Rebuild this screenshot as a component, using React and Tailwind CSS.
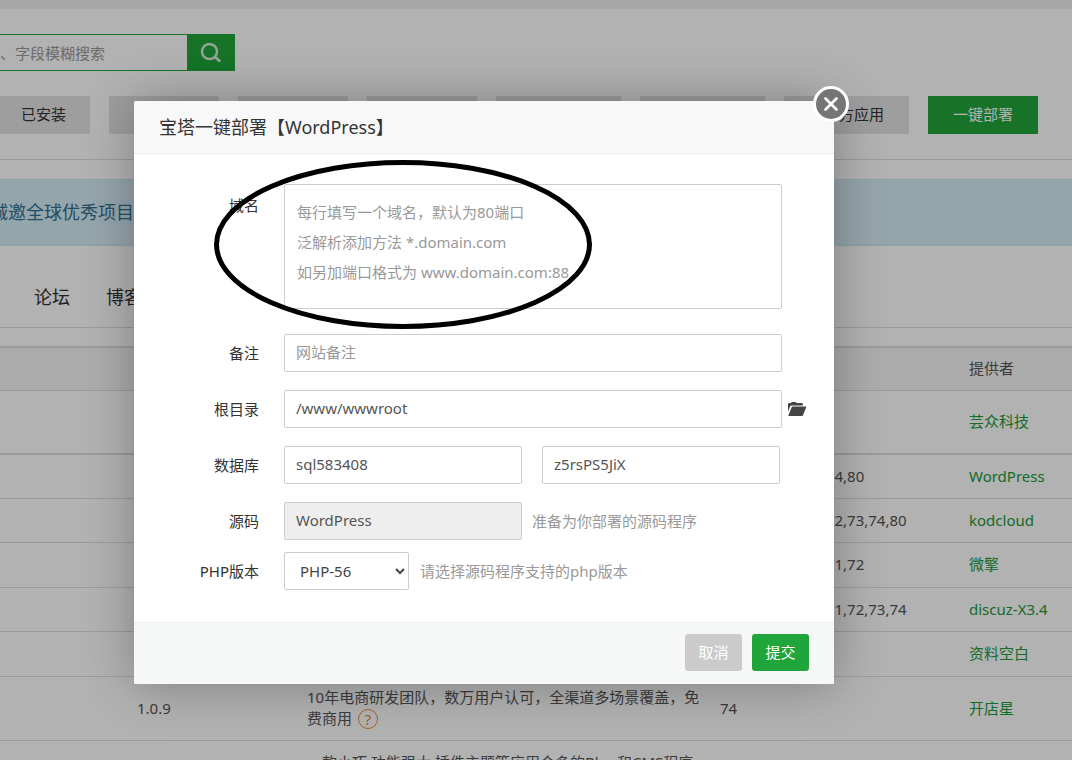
import React, { useState } from 'react';

const tabs = ['运行环境', '系统工具', '宝塔插件', '专业版插件', '企业版插件', '第三方应用'];

const rows = [
  { version: '', desc: '', php: '', provider: '芸众科技', style: 'h-[64px] border-b-2' },
  { version: '', desc: '', php: '56,70,71,72,73,74,80', provider: 'WordPress', style: 'h-[44px] border-b' },
  { version: '', desc: '', php: '54,55,56,70,71,72,73,74,80', provider: 'kodcloud', style: 'h-[44px] border-b' },
  { version: '', desc: '', php: '53,54,55,56,70,71,72', provider: '微擎', style: 'h-[45px] border-b' },
  { version: '', desc: '', php: '53,54,55,56,70,71,72,73,74', provider: 'discuz-X3.4', style: 'h-[44px] border-b' },
  { version: '', desc: '', php: '', provider: '资料空白', style: 'h-[45px] border-b' },
  {
    version: '1.0.9',
    desc: '10年电商研发团队，数万用户认可，全渠道多场景覆盖，免费商用',
    help: true,
    php: '74',
    provider: '开店星',
    style: 'h-[64px] border-b',
  },
  { version: '', desc: '一款小巧,功能强大,插件主题等应用众多的Blog和CMS程序', php: '', provider: '', style: 'h-[45px] border-b' },
];

const inputStyle = 'h-[38px] border border-[#ccc] rounded-xs px-[11px] pb-[2px] text-[#555] placeholder-[#999] outline-none focus:border-[#20a53a]';

const SearchIcon = () => (
  <svg width="22" height="22" viewBox="0 0 22 22" fill="none" stroke="#d8eedc" strokeWidth="2.4">
    <circle cx="9.500" cy="9.500" r="7.500" />
    <path d="M14.800 14.800l5.400 4.700" strokeWidth="2.800" />
  </svg>
);

const FolderIcon = () => (
  <svg width="20" height="16" viewBox="0 0 20 16" fill="#444">
    <path d="M1 10.5V3.2c0-.7.5-1.2 1.2-1.2H4l.8-1h4l.8 1h5.2c.6 0 1 .4 1 1v1.500H4.600c-.7 0-1.200.4-1.500 1z" />
    <path d="M5 5.600h14.500L16 14.200c-.2.500-.5.800-1 .800H1.200z" />
  </svg>
);

// --- BACKGROUND PAGE ---
const SoftStore = () => (
  <div className="text-[#555]">
    <div className="h-[9px] bg-[#f0f0f0]"></div>

    <form className="flex mt-[25px]">
      <input
        type="text"
        aria-label="搜索"
        placeholder="、字段模糊搜索"
        className="w-[187px] h-[37px] border-y border-[#20a53a] placeholder-[#999] outline-none"
      />
      <button type="button" title="搜索" className="w-12 h-[37px] bg-[#20a53a] flex items-center justify-center">
        <SearchIcon />
      </button>
    </form>

    <div className="flex gap-[19px] mt-[25px] pb-[25px] border-b border-[#ddd] text-[#333] whitespace-nowrap">
      <button className="h-[38px] pb-px pl-[21px] pr-6 bg-[#e2e2e2]">已安装</button>
      {tabs.map((tab) => (
        <button key={tab} className="h-[38px] pb-px px-[25px] bg-[#e2e2e2]">{tab}</button>
      ))}
      <button className="h-[38px] pb-px px-[25px] bg-[#20a53a] text-white">一键部署</button>
    </div>

    <div className="mt-[19px] h-[67px] pb-[2px] bg-[#d6ecf6] border-y border-[#cbe6ee] flex items-center text-lg text-[#31708f] overflow-hidden">
      <span className="-ml-[10px]">诚邀全球优秀项目入驻</span>
    </div>

    <div className="flex gap-9 pl-[34px] pt-[37px] pb-4 border-b border-[#ddd] text-lg text-[#333]">
      <span>论坛</span>
      <span>博客</span>
    </div>

    <table className="mt-[18px] w-full table-fixed border-collapse text-left">
      <colgroup>
        <col className="w-[127px]" />
        <col className="w-[170px]" />
        <col className="w-[413px]" />
        <col className="w-[249px]" />
        <col />
      </colgroup>
      <thead>
        <tr className="h-[43px] bg-[#f6f6f6] border-t-2 border-b border-[#ddd]">
          <th></th>
          <th></th>
          <th></th>
          <th></th>
          <th className="px-[10px] font-normal">提供者</th>
        </tr>
      </thead>
      <tbody>
        {rows.map((row, i) => (
          <tr key={i} className={`border-[#ddd] ${row.style}`}>
            <td></td>
            <td className="px-[10px]">{row.version}</td>
            <td className="px-[10px]">
              {row.desc}
              {row.help && (
                <a href="#help" className="inline-flex w-5 h-5 ml-[6px] items-center justify-center rounded-full border border-[#f08a2c] text-[#f08a2c] leading-none align-middle">?</a>
              )}
            </td>
            <td className="px-[10px] whitespace-nowrap">{row.php}</td>
            <td className="px-[10px]">
              <a href="#provider" className="text-[#209a38]">{row.provider}</a>
            </td>
          </tr>
        ))}
      </tbody>
    </table>
  </div>
);

const Row = ({ label, id, className = 'mb-[18px]', children }) => (
  <div className={`flex items-center ${className}`}>
    <label htmlFor={id} className="w-[125px] mr-[25px] shrink-0 text-right text-[#333]">{label}</label>
    {children}
  </div>
);

// --- DEPLOY DIALOG ---
const DeployDialog = () => {
  const [path, setPath] = useState('/www/wwwroot');
  const [dbUser, setDbUser] = useState('sql583408');
  const [dbPass, setDbPass] = useState('z5rsPS5JiX');
  const [php, setPhp] = useState('PHP-56');

  return (
    <div role="dialog" aria-label="宝塔一键部署" className="absolute left-[134px] top-[101px] w-[700px] bg-white rounded-xs shadow-[1px_1px_50px_rgba(0,0,0,0.3)]">
      <h2 className="h-[53px] px-[25px] flex items-center bg-[#f8f8f8] border-b border-[#eee] rounded-t-xs text-lg text-[#333]">
        宝塔一键部署【WordPress】
      </h2>
      <button title="关闭" className="absolute -right-[15px] -top-[15px] w-9 h-9 rounded-full border-3 border-white bg-[#757575] flex items-center justify-center">
        <svg width="14" height="14" viewBox="0 0 14 14" stroke="#fff" strokeWidth="2.6" strokeLinecap="round">
          <path d="M1.500 1.500l11 11M12.500 1.500l-11 11" />
        </svg>
      </button>

      <form className="pt-[30px] pb-8">
        <div className="flex items-start mb-[25px]">
          <label htmlFor="domain" className="w-[125px] mr-[25px] pt-[11px] shrink-0 text-right text-[#333]">域名</label>
          <textarea
            id="domain"
            className="w-[498px] h-[125px] border border-[#ccc] rounded-xs px-3 pt-3 leading-[30px] resize-none overflow-hidden placeholder-[#999] outline-none focus:border-[#20a53a]"
            placeholder={'每行填写一个域名，默认为80端口\n泛解析添加方法 *.domain.com\n如另加端口格式为 www.domain.com:88'}
          />
        </div>
        <Row label="备注" id="remark">
          <input id="remark" type="text" placeholder="网站备注" className={`w-[498px] ${inputStyle}`} />
        </Row>
        <Row label="根目录" id="path">
          <input id="path" type="text" value={path} onChange={(e) => setPath(e.target.value)} className={`w-[498px] ${inputStyle}`} />
          <button type="button" title="选择目录" className="ml-[5px]">
            <FolderIcon />
          </button>
        </Row>
        <Row label="数据库" id="db">
          <input id="db" type="text" value={dbUser} onChange={(e) => setDbUser(e.target.value)} className={`w-[238px] mr-5 ${inputStyle}`} />
          <input type="text" aria-label="数据库密码" value={dbPass} onChange={(e) => setDbPass(e.target.value)} className={`w-[238px] ${inputStyle}`} />
        </Row>
        <Row label="源码" id="source" className="mb-3">
          <input id="source" type="text" value="WordPress" disabled className={`w-[238px] bg-[#eee] ${inputStyle}`} />
          <span className="ml-[10px] text-[#999]">准备为你部署的源码程序</span>
        </Row>
        <Row label="PHP版本" id="php" className="">
          <select id="php" value={php} onChange={(e) => setPhp(e.target.value)} className="w-[125px] h-[38px] border border-[#ccc] rounded-xs pl-[11px] pr-[6px] bg-white text-[#444] outline-none">
            <option>PHP-56</option>
            <option>PHP-70</option>
            <option>PHP-72</option>
          </select>
          <span className="ml-[11px] text-[#999]">请选择源码程序支持的php版本</span>
        </Row>
      </form>

      <div className="h-[62px] px-[25px] pb-[2px] flex items-center justify-end gap-[10px] bg-[#f6f8f8] border-t border-[#edf1f2] rounded-b-xs text-white">
        <button className="w-[57px] h-[37px] rounded-[3px] bg-[#cbcbcb]">取消</button>
        <button className="w-[57px] h-[37px] rounded-[3px] bg-[#20a53a]">提交</button>
      </div>
    </div>
  );
};

const App = () => {
  return (
    <div className="relative h-screen overflow-hidden bg-white font-['Noto_Sans','Noto_Sans_CJK_SC',sans-serif] text-[15px] leading-[21px]">
      <SoftStore />
      <div className="absolute inset-0 bg-black/30"></div>
      <DeployDialog />
      {/* Hand-drawn marker around the domain field */}
      <svg className="absolute left-[214px] top-[160px] pointer-events-none" width="378" height="169" fill="none" stroke="#000" strokeWidth="5">
        <ellipse cx="189" cy="84.5" rx="186.5" ry="82" />
      </svg>
    </div>
  );
};

export default App;
